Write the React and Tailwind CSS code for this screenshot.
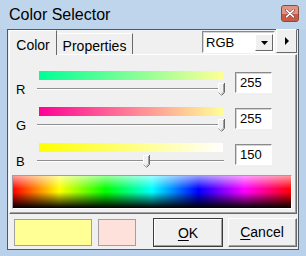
import React from "react";

const rows = [
  { label: "R", value: 255, grad: "bg-[linear-gradient(to_right,#00ff96,#ffff96)]", h: "h-[36px]" },
  { label: "G", value: 255, grad: "bg-[linear-gradient(to_right,#ff0096,#ffff96)]", h: "h-[36px]" },
  { label: "B", value: 150, grad: "bg-[linear-gradient(to_right,#ffff00,#ffffff)]", h: "h-[32px]" },
];

function Thumb({ value }) {
  return (
    <svg
      className="absolute top-[12px]"
      style={{ left: Math.round((value / 255) * 181) }}
      width="7"
      height="13"
      viewBox="0 0 7 13"
    >
      <polygon points="0,0 6,0 6,9 3,12 0,9" fill="#f0f0f0" />
      <polyline points="0.5,9 0.5,0.5 5.5,0.5" fill="none" stroke="#ffffff" strokeWidth="1" />
      <polyline points="6.5,0 6.5,9.5 3.5,12.5" fill="none" stroke="#696969" strokeWidth="1" />
      <polyline points="5.5,1 5.5,9 3,11.5" fill="none" stroke="#a0a0a0" strokeWidth="1" />
      <polyline points="0.5,9.5 3,12" fill="none" stroke="#a0a0a0" strokeWidth="1" />
    </svg>
  );
}

function SliderRow({ label, value, grad, h }) {
  return (
    <div className={`flex ${h}`}>
      <div className="w-[27px] pl-[6px] pt-[11px] text-[13px] leading-[15px] text-black">{label}</div>
      <div className="relative w-[187px]">
        <div className={`ml-[2px] w-[184px] h-[9px] ${grad}`} />
        <div className="mt-[8px] h-[2px] border-t border-t-[#8f8f8f] border-b border-b-white" />
        <Thumb value={value} />
      </div>
      <div className="ml-[11px] mt-[1px] w-[37px] h-[21px] border border-t-[#8a8a8a] border-l-[#8a8a8a] border-r-white border-b-white bg-white">
        <div className="w-full h-full border-t border-l border-t-[#d4d4d4] border-l-[#d4d4d4] pl-[3px] text-[13px] leading-[18px] text-black">
          {value}
        </div>
      </div>
    </div>
  );
}

export default function App() {
  return (
    <div
      className="w-[306px] h-[256px] bg-[#b9d1ea] flex flex-col overflow-hidden select-none"
      style={{ fontFamily: '"Liberation Sans", Arial, sans-serif' }}
    >
      {/* Title bar */}
      <div className="h-[29px] flex items-center pl-[9px] pr-[7px] bg-[#bfd5ec]">
        <div className="text-[16px] leading-[18px] text-black pt-[1px]">Color Selector</div>
        <div className="ml-auto w-[18px] h-[17px] mt-[-2px] rounded-[3px] border border-[#8a4a40] bg-[#c9584b] flex flex-col overflow-hidden relative">
          <div className="h-[8px] bg-[#e09484]" />
          <div className="flex-1 bg-[#c85a48]" />
          <svg className="absolute left-[3px] top-[3px]" width="10" height="9" viewBox="0 0 10 9">
            <path d="M1.5 1.2 L8.5 7.8 M8.5 1.2 L1.5 7.8" stroke="#8a3a30" strokeWidth="2.8" strokeLinecap="round" />
            <path d="M1.5 1.2 L8.5 7.8 M8.5 1.2 L1.5 7.8" stroke="#ffffff" strokeWidth="1.6" strokeLinecap="round" />
          </svg>
        </div>
      </div>

      {/* Client area */}
      <div className="mx-[7px] h-[221px] border border-[#4f5a66] bg-[#f0f0f0] flex flex-col">
        {/* Tab control */}
        <div className="ml-[1px] w-[288px] flex flex-col">
          {/* Header */}
          <div className="h-[24px] flex items-end">
            <div className="relative z-10 w-[48px] h-[25px] -mb-px bg-[#f0f0f0] border-t border-l border-r border-t-white border-l-white border-r-[#696969] flex justify-center pt-[6px] text-[14px] leading-[16px] text-black">
              Color
            </div>
            <div className="w-[76px] h-[21px] border-t border-r border-t-white border-r-[#696969] flex justify-center pt-[4px] text-[14px] leading-[16px] text-black">
              Properties
            </div>
            <div className="flex-1" />
            <div className="mb-[1px] w-[73px] h-[22px] border border-t-[#8a8a8a] border-l-[#8a8a8a] border-r-white border-b-white bg-white">
              <div className="w-full h-full border-t border-l border-t-[#d4d4d4] border-l-[#d4d4d4] flex items-center pl-[2px] pr-[1px]">
                <span className="text-[13px] leading-[15px] text-black">RGB</span>
                <div className="ml-auto w-[18px] h-[17px] bg-[#f0f0f0] border border-t-white border-l-white border-r-[#696969] border-b-[#696969] flex items-center justify-center">
                  <svg width="7" height="4" viewBox="0 0 7 4">
                    <polygon points="0,0 7,0 3.5,4" fill="#000" />
                  </svg>
                </div>
              </div>
            </div>
            <div className="ml-[1px] mb-[1px] w-[21px] h-[24px] bg-[#f0f0f0] border border-t-white border-l-white border-r-[#696969] border-b-[#696969] flex items-center justify-center">
              <svg width="4" height="8" viewBox="0 0 4 8">
                <polygon points="0,0 4,4 0,8" fill="#000" />
              </svg>
            </div>
          </div>

          {/* Panel */}
          <div className="h-[160px] border-t border-l border-t-white border-l-white border-r border-b border-r-[#696969] border-b-[#696969]">
            <div className="h-full border-r border-b border-r-[#a0a0a0] border-b-[#a0a0a0] pt-[16px] flex flex-col">
              {rows.map((r) => (
                <SliderRow key={r.label} {...r} />
              ))}
              <div className="ml-[2px] w-[280px] h-[34px] border border-t-[#a0a0a0] border-l-[#a0a0a0] border-r-white border-b-white">
                <div className="w-full h-full bg-[linear-gradient(to_right,#ff0000,#ffff00,#00ff00,#00ffff,#0000ff,#ff00ff,#ff0000)]">
                  <div className="w-full h-full bg-[linear-gradient(to_bottom,rgba(255,255,255,0.6),rgba(255,255,255,0)_40%,rgba(0,0,0,0)_50%,rgba(0,0,0,1)_100%)]" />
                </div>
              </div>
            </div>
          </div>
        </div>

        {/* Bottom area */}
        <div className="flex items-start mt-[4px]">
          <div className="ml-[6px] mt-[1px] w-[78px] h-[27px] border border-[#a0a0a0] bg-[#ffff96]" />
          <div className="ml-[6px] mt-[1px] w-[38px] h-[27px] border border-[#a0a0a0] bg-[#fde1da]" />
          <div className="ml-[17px] w-[70px] h-[29px] border border-[#3c3c3c]">
            <div className="w-full h-full bg-[#f0f0f0] border border-t-white border-l-white border-r-[#a0a0a0] border-b-[#a0a0a0] flex items-center justify-center text-[14px] leading-[16px] text-black">
              <span><span className="underline underline-offset-2">O</span>K</span>
            </div>
          </div>
          <div className="ml-[5px] w-[69px] h-[29px] bg-[#f0f0f0] border border-t-white border-l-white border-r-[#696969] border-b-[#696969]">
            <div className="w-full h-full border-r border-b border-r-[#a0a0a0] border-b-[#a0a0a0] flex items-center justify-center text-[14px] leading-[16px] text-black">
              <span><span className="underline underline-offset-2">C</span>ancel</span>
            </div>
          </div>
        </div>
      </div>
    </div>
  );
}
